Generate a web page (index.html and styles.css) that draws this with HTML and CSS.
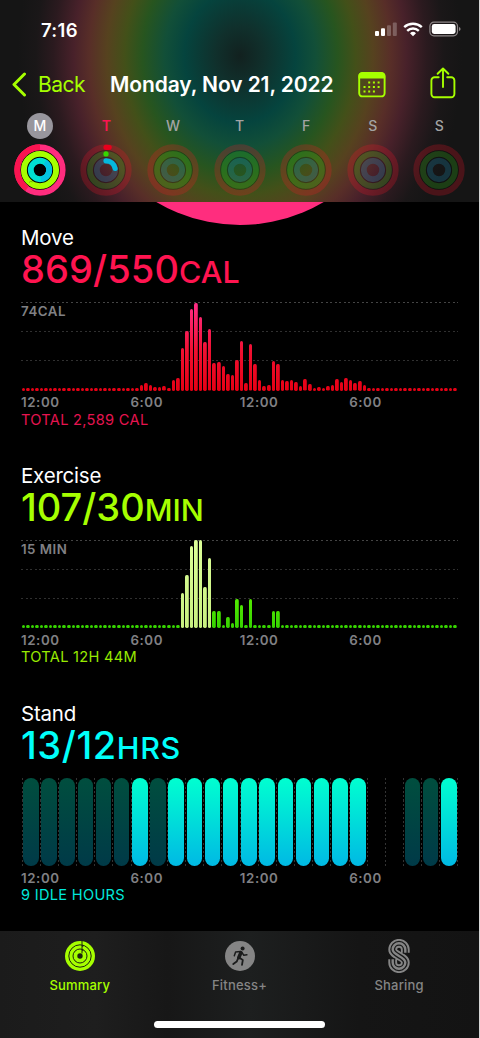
FILE: index.html
```html
<!DOCTYPE html>
<html lang="en">
<head>
  <meta charset="UTF-8" />
  <meta name="viewport" content="width=device-width, initial-scale=1.0"/>
  <title>Activity Summary</title>
  <link rel="stylesheet" href="styles.css">
</head>
<body>

<div class="screen">
  <header class="header">
    <div class="status">
      <span class="time">7:16</span>
      <svg class="status-icons" width="88" height="18" viewBox="0 0 88 18">
        <g fill="#fff">
          <rect x="1" y="10" width="4" height="5" rx="1"/>
          <rect x="7" y="7.3" width="4" height="7.7" rx="1"/>
          <rect x="13" y="4.3" width="4" height="10.7" rx="1" opacity=".25"/>
          <rect x="18.8" y="1.5" width="4" height="13.5" rx="1" opacity=".25"/>
          <path d="M39 15.2l-3-3a4.3 4.3 0 0 1 6 0z"/>
        </g>
        <g fill="none" stroke="#fff" stroke-width="2.4">
          <path d="M33.2 9.8a8.4 8.4 0 0 1 11.6 0"/>
          <path d="M30.2 6.2a13 13 0 0 1 17.6 0"/>
        </g>
        <rect x="55.9" y="1.2" width="27.6" height="13.6" rx="4" fill="none" stroke="#8d8788" stroke-width="1.2"/>
        <rect x="57.8" y="3.1" width="23.8" height="9.8" rx="2.3" fill="#fff"/>
        <path d="M85 6v4q1.6-.5 1.6-2T85 6z" fill="#8d8788"/>
      </svg>
    </div>

    <nav class="nav">
      <svg class="chevron" width="15" height="26" viewBox="0 0 15 26">
        <path d="M12.5 2L2 12.5l10.5 10.5" fill="none" stroke="#a6ff00" stroke-width="3" stroke-linecap="round" stroke-linejoin="round"/>
      </svg>
      <a class="back">Back</a>
      <h1 class="date">Monday, Nov 21, 2022</h1>
      <svg class="calendar" width="28" height="26" viewBox="0 0 28 26">
        <rect x="1.2" y="1" width="25.4" height="23.4" rx="3.2" fill="none" stroke="#a6ff00" stroke-width="1.9"/>
        <path d="M.5 6.6V4A3.6 3.6 0 0 1 4 .4h19.6A3.6 3.6 0 0 1 27.2 4v2.6z" fill="#a6ff00"/>
        <g stroke="#a6ff00" stroke-width="2" stroke-dasharray="2 2.7">
          <path d="M10.2 10.4h12"/><path d="M5.5 14.9h16.6"/><path d="M5.5 19.4h11.6"/>
        </g>
      </svg>
      <svg class="share" width="26" height="32" viewBox="0 0 26 32">
        <path d="M8.7 10.2H4.6a3.2 3.2 0 0 0-3.2 3.2v13.7a3.2 3.2 0 0 0 3.2 3.2h16.6a3.2 3.2 0 0 0 3.2-3.2V13.4a3.2 3.2 0 0 0-3.2-3.2h-4M13 20V1.8M7.6 6.8L13 1.5l5.4 5.3" fill="none" stroke="#a6ff00" stroke-width="1.9" stroke-linecap="round" stroke-linejoin="round"/>
      </svg>
    </nav>

    <div class="week" id="week"></div>
  </header>

  <main class="content">
    <div class="big-ring"></div>

    <section class="metric move">
      <h2>Move</h2>
      <p class="value">869/550<span>CAL</span></p>
      <div class="chart" id="moveChart"><span class="scale">74CAL</span></div>
      <div class="axis"><span>12:00</span><span>6:00</span><span>12:00</span><span>6:00</span></div>
      <p class="total">TOTAL 2,589 CAL</p>
    </section>

    <section class="metric exercise">
      <h2>Exercise</h2>
      <p class="value">107/30<span>MIN</span></p>
      <div class="chart" id="exerciseChart"><span class="scale">15 MIN</span></div>
      <div class="axis"><span>12:00</span><span>6:00</span><span>12:00</span><span>6:00</span></div>
      <p class="total">TOTAL 12H 44M</p>
    </section>

    <section class="metric stand">
      <h2>Stand</h2>
      <p class="value">13/12<span>HRS</span></p>
      <div class="hours" id="standChart"></div>
      <div class="axis"><span>12:00</span><span>6:00</span><span>12:00</span><span>6:00</span></div>
      <p class="total">9 IDLE HOURS</p>
    </section>
  </main>

  <footer class="tabbar">
    <div class="tabs">
      <a class="tab active">
        <svg width="34" height="34" viewBox="-17 -17 34 34">
          <circle r="15" fill="#a6ff00"/>
          <g fill="none" stroke="#1c2210" stroke-width="1">
            <circle r="11.2"/><circle r="7"/>
          </g>
          <circle r="2.7" fill="#1c2210"/>
          <path d="M2 -15.2V-2.5" stroke="#1c2210" stroke-width="1"/>
          <path d="M2.2 -11.5l1.6 1.4-1.6 1.4zM2.2 -7.3l1.6 1.4-1.6 1.4z" fill="#1c2210"/>
        </svg>
        <span>Summary</span>
      </a>
      <a class="tab">
        <svg width="34" height="34" viewBox="-17 -17 34 34">
          <circle r="15" fill="#858585"/>
          <circle cx="2.6" cy="-7.6" r="2" fill="#1b1c1c"/>
          <g fill="none" stroke="#1b1c1c" stroke-linecap="round" stroke-linejoin="round">
            <path d="M.9 -3.4L-1.2 1.6" stroke-width="3.6"/>
            <path d="M.4 -4.6l-4.8 .5-1.3 3.8M1.8 -3.6l2 2.9 3.1-.5" stroke-width="1.5"/>
            <path d="M-.6 1.8l3.4 2.3-.8 4.8M-1.8 2l-1.5 3.6-3.4 2.5" stroke-width="1.8"/>
          </g>
        </svg>
        <span>Fitness+</span>
      </a>
      <a class="tab">
        <svg width="34" height="34" viewBox="-17 -17 34 34">
          <g fill="none" stroke-linecap="butt">
            <path d="M6.3 -3.3V-6.4A6.3 6.3 0 0 0 -6.3 -6.4C-6.3 -.7 6.3 .7 6.3 6.4A6.3 6.3 0 0 1 -6.3 6.4V3.3" stroke="#858585" stroke-width="8.8"/>
            <path d="M6.3 -2.5V-6.4A6.3 6.3 0 0 0 -6.3 -6.4C-6.3 -.7 6.3 .7 6.3 6.4A6.3 6.3 0 0 1 -6.3 6.4V2.5" stroke="#191a1a" stroke-width="5"/>
            <path d="M6.3 -3.3V-6.4A6.3 6.3 0 0 0 -6.3 -6.4C-6.3 -.7 6.3 .7 6.3 6.4A6.3 6.3 0 0 1 -6.3 6.4V3.3" stroke="#858585" stroke-width="2.4"/>
          </g>
        </svg>
        <span>Sharing</span>
      </a>
    </div>
    <div class="home-indicator"></div>
  </footer>
</div>

<script>
const CHART_HEIGHT = 88;
const SLOTS = 96; // one bar per 15 minutes

// Bar heights in px, keyed by the first slot of each run
const MOVE = {
  26: [6, 8, 6, 4, 4, 4.5, 3, 11, 13, 43, 60, 82, 88, 74, 49, 61.5, 28, 29, 25, 17, 15.5, 31,
       50, 8, 46.5, 27, 11, 5, 6, 30, 27, 11, 9.5, 10.5, 9, 5, 11.5, 7, 3, 4, 3, 4.5, 6, 12, 9,
       13, 11, 7.5, 10, 6]
};
const EXERCISE = {
  35: [35, 53, 82, 88, 88, 41, 70, 17.5, 17.5, 3, 11.5, 5.5, 29, 23.5, 3, 29],
  55: [17.5, 17.5]
};
// 1 = stood, 0 = idle, - = no data
const STAND = "0000001011111111111--001";

function drawBars(id, runs, isWorkout) {
  const heights = new Array(SLOTS).fill(3);
  for (const start in runs) {
    runs[start].forEach((h, i) => heights[Number(start) + i] = h);
  }
  const chart = document.getElementById(id);
  heights.forEach((h, i) => {
    const bar = document.createElement("i");
    bar.className = isWorkout(i) ? "bar workout" : "bar";
    bar.style.height = Math.min(h, CHART_HEIGHT) + "px";
    chart.appendChild(bar);
  });
}

drawBars("moveChart", MOVE, () => false);
drawBars("exerciseChart", EXERCISE, i => i >= 35 && i <= 41);

document.getElementById("standChart").innerHTML = STAND.split("").map(s => {
  const cls = s === "1" ? "pill on" : s === "0" ? "pill" : "pill none";
  return `<div class="hour"><i class="${cls}"></i></div>`;
}).join("");

const FULL_RINGS = `
  <circle r="25.8" fill="#000"/>
  <circle class="ring" r="22.7" stroke="#ff2d7e"/>
  <path class="ring" d="M-13 18.6A22.7 22.7 0 0 1 0 -22.7" stroke="#fa1450"/>
  <circle class="ring" r="16.1" stroke="#a6ff00"/>
  <path d="M-11 12.5a2.8 2.8 0 0 1 3.6-.6" fill="none" stroke="#6fb800" stroke-width="1"/>
  <circle class="ring" r="9.2" stroke="#00dfd0"/>
  <path class="ring" d="M5 -7.7A9.2 9.2 0 0 1 1 9.1" stroke="#04c3e0"/>`;

const STARTED = `
  <path class="ring cap" d="M0 -22.7A22.7 22.7 0 0 1 3.2 -22.5" stroke="#e8001c"/>
  <path class="ring cap" d="M0 -16.1h.01" stroke="#35d800"/>
  <path class="ring cap" d="M0 -9.2A9.2 9.2 0 0 1 9.1 -1.6" stroke="#05b8de"/>`;

document.getElementById("week").innerHTML = "MTWTFSS".split("").map((day, i) => {
  const empty = `<g class="empty">
    <circle class="ring" r="22.7" stroke="#fa1428"/>
    <circle class="ring" r="16.1" stroke="#36c818"/>
    <circle class="ring" r="9.2" stroke="#1b9bc8"/></g>
    <g class="gaps"><circle r="19.3"/><circle r="12.6"/></g>`;
  const rings = i === 0 ? FULL_RINGS : i === 1 ? empty + STARTED : empty;
  const cls = i === 0 ? "day selected" : i === 1 ? "day today" : "day";
  return `<div class="${cls}"><span>${day}</span>
    <svg width="52" height="52" viewBox="-26 -26 52 52">${rings}</svg></div>`;
}).join("");
</script>

</body>
</html>
```
FILE: styles.css
```css
* {
  box-sizing: border-box;
  margin: 0;
  padding: 0;
}

html {
  background: #d6d6d6;
}

body {
  font-family: 'Inter', 'Liberation Sans', sans-serif;
  color: #fff;
  overflow: hidden;
}

.screen {
  width: 479px;
  height: 1038px;
  background: #000;
  display: flex;
  flex-direction: column;
}

/* Header */
.header {
  height: 202px;
  flex: none;
  background: radial-gradient(ellipse 222px 268px at 240px 56px,
    #12211f 0%, #10302c 11%, #05443e 25%, #124f38 34%, #27551f 44%,
    #435019 52%, #56421f 60%, #582e28 68%, #48212a 75%, #2b1a1f 84%,
    #1a1718 92%, #151515 100%);
}

.status {
  height: 60px;
  padding: 0 17px 0 41px;
  display: flex;
  align-items: center;
  justify-content: space-between;
}

.time {
  font-size: 18.5px;
  font-weight: 600;
  letter-spacing: 0.3px;
}

.nav {
  height: 49px;
  padding: 0 24px 0 12px;
  display: flex;
  align-items: center;
}

.back {
  width: 72px;
  margin-left: 11px;
  font-size: 21px;
  letter-spacing: -0.5px;
  color: #a6ff00;
}

.date {
  width: 224px;
  font-size: 21px;
  font-weight: 600;
  letter-spacing: -0.1px;
  white-space: nowrap;
}

.calendar {
  margin-left: 24px;
}

.share {
  margin: -3px -1px 0 auto;
}

.week {
  padding: 0 6.5px;
  display: flex;
}

.day {
  flex: 1;
  display: flex;
  flex-direction: column;
  align-items: center;
}

.day span {
  width: 26px;
  height: 26px;
  margin: 4px 0 5px;
  border-radius: 50%;
  font-size: 14px;
  font-weight: 500;
  line-height: 26px;
  text-align: center;
  color: #a3a3a3;
}

.day.selected span {
  background: #98969d;
  color: #fff;
}

.day.today span {
  color: #fa1450;
  font-weight: 600;
}

.ring {
  fill: none;
  stroke-width: 5.9;
}

.ring.cap {
  stroke-width: 5.2;
  stroke-linecap: round;
}

.empty {
  opacity: 0.23;
}

.gaps {
  fill: none;
  stroke: #000;
  stroke-width: 0.9;
  opacity: 0.25;
}

/* Metrics */
.content {
  position: relative;
  height: 729px;
  padding: 24px 21.5px 0 21px;
  overflow: hidden;
}

.big-ring {
  position: absolute;
  left: 76px;
  top: -305.5px;
  width: 328px;
  height: 328px;
  border-radius: 50%;
  background: #ff2d7e;
}

.metric {
  height: 237.9px;
}

.metric h2 {
  font-size: 20.5px;
  font-weight: 400;
  line-height: 24px;
  letter-spacing: -0.2px;
}

.value {
  height: 52px;
  font-size: 38px;
  font-weight: 500;
  line-height: 38px;
  white-space: nowrap;
}

.value span {
  font-size: 30.5px;
}

.move .value {
  color: #ff1450;
  letter-spacing: 0.1px;
}

.exercise .value {
  color: #a6ff00;
}

.stand .value {
  color: #00fffa;
  letter-spacing: 0.6px;
}

.chart {
  position: relative;
  height: 88.5px;
  display: flex;
  align-items: flex-end;
  background:
    repeating-linear-gradient(to right, transparent 0 2px, #000 2px 4.545px),
    linear-gradient(#444, #444) 0 0 / 100% 1px no-repeat,
    linear-gradient(#303030, #303030) 0 29px / 100% 1px no-repeat,
    linear-gradient(#303030, #303030) 0 58px / 100% 1px no-repeat;
}

.scale {
  position: absolute;
  left: 0;
  top: 1px;
  font-size: 13.3px;
  font-weight: 600;
  line-height: 17px;
  letter-spacing: 0.5px;
  color: #808084;
}

.bar {
  flex: 1;
  margin: 0 0.5px;
  background: linear-gradient(to top, #e60014, #f01030 45%, #ff2d86) bottom / 100% 88px no-repeat;
  border-radius: 1.7px;
}

.exercise .bar {
  background-image: linear-gradient(to top, #35d200, #58ee00 40%);
}

.exercise .bar.workout {
  background-image: linear-gradient(to top, #c8f080, #dcff98);
}

.axis {
  display: grid;
  grid-template-columns: repeat(4, 109.4px);
  padding-top: 2.5px;
  font-size: 13.3px;
  font-weight: 600;
  line-height: 18px;
  letter-spacing: 0.6px;
  color: #808084;
}

.total {
  padding-top: 0.5px;
  font-size: 14.6px;
  line-height: 17px;
  letter-spacing: 0.3px;
  white-space: nowrap;
}

.move .total { color: #e61450; }
.exercise .total { color: #98ea00; }
.stand .total { color: #00e8dc; }

.hours {
  height: 88.5px;
  padding-left: 0.5px;
  display: flex;
}

.hour {
  flex: 1;
  padding-left: 1.6px;
  background: repeating-linear-gradient(#333 0 2px, transparent 2px 4.3px) left / 1px 100% no-repeat;
}

.hour:last-child {
  background:
    repeating-linear-gradient(#333 0 2px, transparent 2px 4.3px) left / 1px 100% no-repeat,
    repeating-linear-gradient(#333 0 2px, transparent 2px 4.3px) right / 1px 100% no-repeat;
}

.pill {
  display: block;
  width: 15.5px;
  height: 88px;
  border-radius: 8px;
  background: linear-gradient(#004e3e, #003a48);
}

.pill.on {
  background: linear-gradient(#00ffd0, #00b9e4);
}

.pill.none {
  background: none;
}

/* Tab bar */
.tabbar {
  flex: 1;
  background: linear-gradient(to right, #1b1b1b, #1e1e1e 20%, #171717 35%, #1d1f1f 52%, #151515 75%, #131313);
}

.tabs {
  height: 90px;
  padding-top: 7.5px;
  display: flex;
}

.tab {
  flex: 1;
  display: flex;
  flex-direction: column;
  align-items: center;
  font-size: 13px;
  font-weight: 500;
  line-height: 18px;
  letter-spacing: 0.2px;
  color: #858585;
}

.tab span {
  margin-top: 3px;
}

.tab.active {
  color: #a6ff00;
}

.home-indicator {
  width: 171px;
  height: 7px;
  margin: 0 auto;
  border-radius: 4px;
  background: #fff;
}
```
